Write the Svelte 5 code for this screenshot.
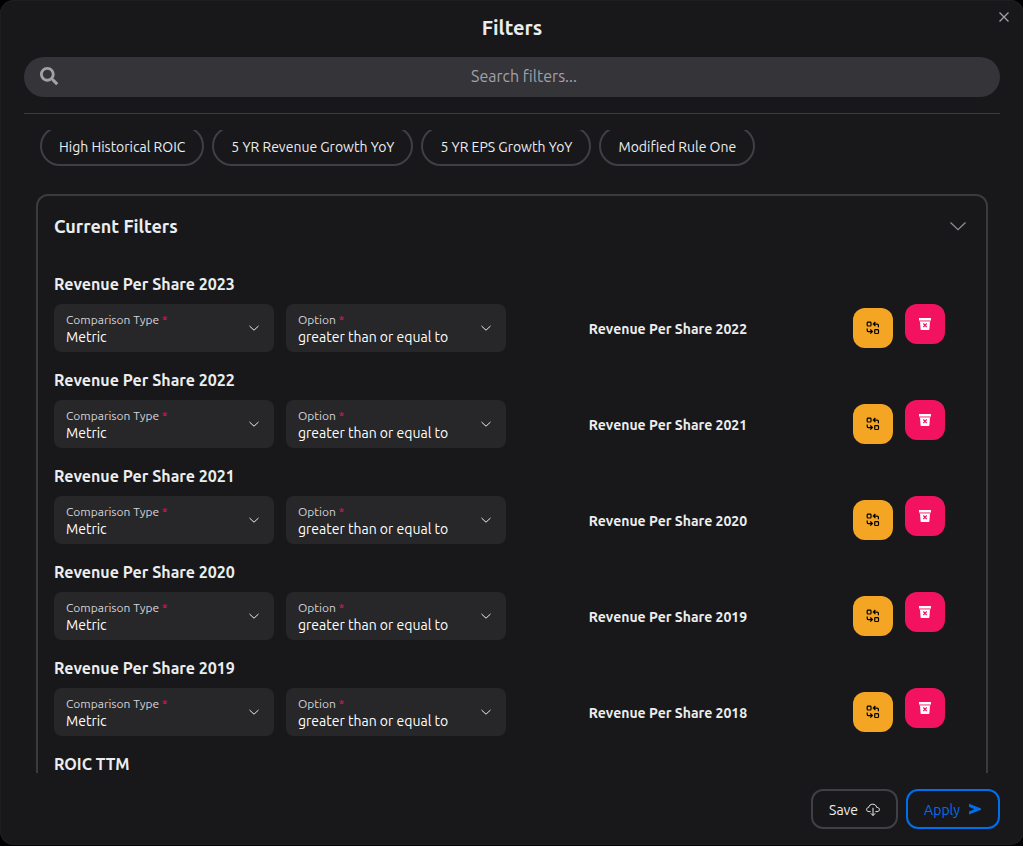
<script lang="ts">
  import { onMount } from 'svelte';

  type TFilter = { id: number; name: string; target?: string };

  const presets = [
    'High Historical ROIC',
    '5 YR Revenue Growth YoY',
    '5 YR EPS Growth YoY',
    'Modified Rule One',
  ];

  let filters: TFilter[] = $state([
    { id: 1, name: 'Revenue Per Share 2023', target: 'Revenue Per Share 2022' },
    { id: 2, name: 'Revenue Per Share 2022', target: 'Revenue Per Share 2021' },
    { id: 3, name: 'Revenue Per Share 2021', target: 'Revenue Per Share 2020' },
    { id: 4, name: 'Revenue Per Share 2020', target: 'Revenue Per Share 2019' },
    { id: 5, name: 'Revenue Per Share 2019', target: 'Revenue Per Share 2018' },
    { id: 6, name: 'ROIC TTM' },
  ]);
  let open = $state(true);
  let search = $state('');
  let body: HTMLElement;

  const removeFilter = (id: number) => {
    filters = filters.filter((f) => f.id !== id);
  };

  onMount(() => {
    body.scrollTop = 12;
  });
</script>

{#snippet chevron()}
  <svg class="field-chevron" width="12" height="12" viewBox="0 0 12 12" fill="none" stroke="currentColor" aria-hidden="true">
    <path d="M1.5 4 6 8.2 10.5 4" />
  </svg>
{/snippet}

<div class="modal" role="dialog" aria-labelledby="modal-title">
  <button class="close" aria-label="Close">
    <svg width="10" height="10" viewBox="0 0 10 10" fill="none" stroke="currentColor" stroke-width="1.3">
      <path d="M.5.5l9 9M9.5.5l-9 9" />
    </svg>
  </button>

  <header class="header">
    <h2 class="title" id="modal-title">Filters</h2>
    <label class="search">
      <svg width="18" height="18" viewBox="0 0 512 512" fill="currentColor" aria-hidden="true">
        <path
          d="M505 442.700 405.300 343c-4.500-4.500-10.600-7-17-7H372c27.600-35.300 44-79.700 44-128C416 93.100 322.900 0 208 0S0 93.100 0 208s93.100 208 208 208c48.300 0 92.700-16.400 128-44v16.300c0 6.400 2.500 12.500 7 17l99.700 99.700c9.400 9.400 24.600 9.400 33.900 0l28.300-28.300c9.400-9.400 9.400-24.600.1-34zM208 336c-70.700 0-128-57.200-128-128 0-70.700 57.200-128 128-128 70.700 0 128 57.200 128 128 0 70.700-57.200 128-128 128z"
        />
      </svg>
      <input type="text" placeholder="Search filters..." aria-label="Search filters" bind:value={search} />
    </label>
    <hr class="divider" />
  </header>

  <div class="body" bind:this={body}>
    <div class="presets">
      {#each presets as preset}
        <button class="preset">{preset}</button>
      {/each}
    </div>

    <section class="panel">
      <button class="panel-header" aria-expanded={open} onclick={() => (open = !open)}>
        Current Filters
        <svg width="24" height="24" viewBox="0 0 24 24" fill="none" stroke="currentColor" stroke-width="1.3" aria-hidden="true">
          <path d="M4.500 8.500 12 15.700 19.500 8.500" />
        </svg>
      </button>

      {#if open}
        <div class="filters">
          {#each filters as filter (filter.id)}
            <div class="filter">
              <h3 class="filter-name">{filter.name}</h3>
              {#if filter.target}
                <div class="filter-row">
                  <div class="field">
                    <label for="type-{filter.id}">Comparison Type <span>*</span></label>
                    <select id="type-{filter.id}">
                      <option>Metric</option>
                    </select>
                    {@render chevron()}
                  </div>
                  <div class="field">
                    <label for="option-{filter.id}">Option <span>*</span></label>
                    <select id="option-{filter.id}">
                      <option>greater than or equal to</option>
                    </select>
                    {@render chevron()}
                  </div>
                  <p class="target">{filter.target}</p>
                  <div class="actions">
                    <button class="action swap" aria-label="Swap metric">
                      <svg width="14" height="14" viewBox="0 0 14 14" fill="none" stroke="currentColor" stroke-width="1.2">
                        <rect x="1.200" y="1.200" width="3.800" height="3.800" rx=".8" />
                        <rect x="8.700" y="8.700" width="3.800" height="3.800" rx=".8" />
                        <path d="M12.400 6.200V4.300c0-.8-.5-1.200-1.200-1.200H7.500M9.400 1 7.300 3.100l2.100 2.100M1.200 7.500v1.900c0 .8.500 1.200 1.200 1.200h3.700M4.300 8.500l2.100 2.100-2.100 2.100" />
                      </svg>
                    </button>
                    <button class="action remove" aria-label="Remove filter" onclick={() => removeFilter(filter.id)}>
                      <svg width="12" height="12" viewBox="0 0 12 12">
                        <path fill="#fff" d="M0 0h12v2.300H0z" />
                        <path fill="#faa0bf" d="M0 2.300h12v1H0z" />
                        <path fill="#fff" d="M1 3.500h10l-.6 7.700a.8.800 0 0 1-.8.800H2.400a.8.800 0 0 1-.8-.8z" />
                        <path fill="none" stroke="#f31260" stroke-width="1.200" d="m4.300 5.500 3.400 3.600m0-3.600L4.300 9.100" />
                      </svg>
                    </button>
                  </div>
                </div>
              {/if}
            </div>
          {/each}
        </div>
      {/if}
    </section>
  </div>

  <footer class="footer">
    <button class="btn">
      Save
      <svg width="14" height="14" viewBox="0 0 14 14" fill="none" stroke="currentColor" aria-hidden="true">
        <path d="M4.600 8.600H2.900C1.500 8.600.6 7.700.6 6.500c0-1.200.9-2 2.100-2.100C3 2.500 4.500 1.200 6.700 1.200c2.100 0 3.700 1.300 4 3.200 1.600 0 2.700.9 2.700 2.100 0 1.200-.9 2.100-2.300 2.100H9.400M7 4.800V12.500M4.800 10.300 7 12.500l2.200-2.200" />
      </svg>
    </button>
    <button class="btn primary">
      Apply
      <svg width="14" height="14" viewBox="0 0 14 14" fill="currentColor" aria-hidden="true">
        <path d="M1 .8 13 5.500v1.200L1 11.600V8.600L6.500 6.200 1 3.700z" />
      </svg>
    </button>
  </footer>
</div>

<style>
  :global(body) {
    overflow: hidden;
    background: #000;
  }

  .modal {
    position: relative;
    box-sizing: border-box;
    height: calc(100vh - 1px);
    margin-right: -1px;
    display: flex;
    flex-direction: column;
    overflow: hidden;
    border-radius: 14px;
    background: #18181b;
    box-shadow: inset 0 0 1px 1px #202022;
    color: #ecedee;
    font-family: Ubuntu, 'Noto Sans', sans-serif;
    font-size: 14px;
    line-height: 20px;
  }

  h2,
  h3,
  p {
    margin: 0;
  }

  button,
  input,
  select {
    margin: 0;
    border: 0;
    background: none;
    color: inherit;
    font: inherit;
  }

  button {
    cursor: pointer;
  }

  svg {
    flex: none;
    display: block;
  }

  .close {
    position: absolute;
    top: 4px;
    right: 7px;
    padding: 8px;
    color: #a1a1aa;
  }

  .header {
    padding: 15px 24px 0;
  }

  .title {
    margin-bottom: 17px;
    font-size: 20px;
    line-height: 25px;
    font-weight: 700;
    text-align: center;
  }

  .search {
    box-sizing: border-box;
    display: flex;
    align-items: center;
    column-gap: 6px;
    height: 40px;
    padding: 0 16px 2px;
    border-radius: 20px;
    background: #353438;
    color: #a1a1aa;
  }

  .search input {
    flex: 1;
    min-width: 0;
    padding: 0;
    outline: none;
    font-size: 16px;
    text-align: center;
  }

  .search input::placeholder {
    color: #a1a1aa;
  }

  .divider {
    height: 1px;
    margin: 16px 0;
    border: 0;
    background: #3b3b3e;
  }

  .body {
    flex: 1;
    min-height: 0;
    padding: 8px 36px;
    overflow-y: auto;
    scrollbar-width: none;
  }

  .presets {
    display: flex;
    flex-wrap: wrap;
    gap: 8px;
    padding: 0 4px;
    margin-bottom: 28px;
  }

  .preset {
    height: 40px;
    padding: 2px 17px 0;
    border: 2px solid #3f3f46;
    border-radius: 20px;
  }

  .panel {
    border: 2px solid #3b3b3e;
    border-radius: 12px;
    padding: 0 16px 16px;
  }

  .panel-header {
    width: 100%;
    height: 60px;
    padding: 0;
    display: flex;
    align-items: center;
    justify-content: space-between;
    font-size: 18px;
    font-weight: 700;
  }

  .panel-header svg {
    color: #8d8d95;
  }

  .filters {
    display: flex;
    flex-direction: column;
    row-gap: 16px;
    padding-top: 16px;
  }

  .filter-name {
    margin-bottom: 8px;
    font-size: 16px;
    line-height: 24px;
    font-weight: 700;
  }

  .filter-row {
    display: grid;
    grid-template-columns: 220px 220px 1fr auto;
    column-gap: 12px;
  }

  .field {
    position: relative;
    box-sizing: border-box;
    height: 48px;
    padding: 8px 12px;
    display: flex;
    flex-direction: column;
    border-radius: 8px;
    background: #27272a;
  }

  .field label {
    font-size: 12px;
    line-height: 16px;
    color: #d4d4d8;
  }

  .field label span {
    color: #f31260;
  }

  .field select {
    flex: none;
    height: 18px;
    padding: 0;
    appearance: none;
    color: #fff;
    line-height: 18px;
    outline: none;
  }

  .field-chevron {
    position: absolute;
    top: 18px;
    right: 14px;
    pointer-events: none;
  }

  .target {
    align-self: center;
    padding-top: 2px;
    font-weight: 700;
    text-align: center;
  }

  .actions {
    display: flex;
    align-items: flex-start;
    column-gap: 12px;
    padding: 0 25px 0 23px;
  }

  .action {
    width: 40px;
    height: 40px;
    padding: 0;
    display: flex;
    align-items: center;
    justify-content: center;
    border-radius: 12px;
  }

  .swap {
    align-self: center;
    background: #f5a524;
    color: #000;
  }

  .remove {
    background: #f31260;
  }

  .footer {
    display: flex;
    justify-content: flex-end;
    column-gap: 8px;
    padding: 16px 24px;
  }

  .btn {
    height: 40px;
    padding: 2px 16px 0;
    display: flex;
    align-items: center;
    column-gap: 8px;
    border: 2px solid #3f3f46;
    border-radius: 12px;
  }

  .primary {
    border-color: #006fee;
    color: #006fee;
  }
</style>
